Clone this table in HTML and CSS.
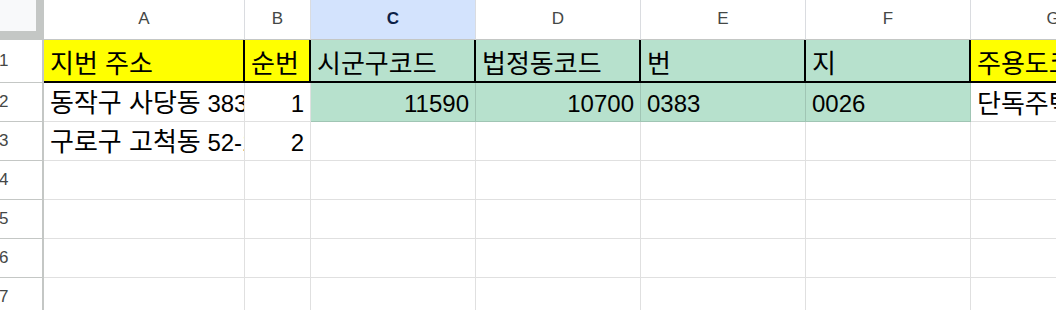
FILE: index.html
```html
<!DOCTYPE html>
<html lang="ko">
<head>
<meta charset="utf-8">
<title>Sheet</title>
<link rel="stylesheet" href="styles.css">
</head>
<body>
<div class="sheet">
  <div class="corner"></div>
  <div class="colhdr">A</div>
  <div class="colhdr">B</div>
  <div class="colhdr active">C</div>
  <div class="colhdr">D</div>
  <div class="colhdr">E</div>
  <div class="colhdr">F</div>
  <div class="colhdr">G</div>

  <div class="rowhdr">1</div>
  <div class="cell head yellow"><span class="ko">지번 주소</span></div>
  <div class="cell head yellow"><span class="ko">순번</span></div>
  <div class="cell head green"><span class="ko">시군구코드</span></div>
  <div class="cell head green"><span class="ko">법정동코드</span></div>
  <div class="cell head green"><span class="ko">번</span></div>
  <div class="cell head green"><span class="ko">지</span></div>
  <div class="cell head yellow"><span class="ko">주용도코드</span></div>

  <div class="rowhdr">2</div>
  <div class="cell"><span><span class="ko">동작구 사당동</span> 383-26</span></div>
  <div class="cell num">1</div>
  <div class="cell num green">11590</div>
  <div class="cell num green">10700</div>
  <div class="cell green">0383</div>
  <div class="cell green">0026</div>
  <div class="cell"><span class="ko">단독주택</span></div>

  <div class="rowhdr">3</div>
  <div class="cell"><span><span class="ko">구로구 고척동</span> 52-1</span></div>
  <div class="cell num">2</div>
  <div class="cell"></div>
  <div class="cell"></div>
  <div class="cell"></div>
  <div class="cell"></div>
  <div class="cell"></div>

  <div class="rowhdr">4</div>
  <div class="cell"></div><div class="cell"></div><div class="cell"></div><div class="cell"></div><div class="cell"></div><div class="cell"></div><div class="cell"></div>

  <div class="rowhdr">5</div>
  <div class="cell"></div><div class="cell"></div><div class="cell"></div><div class="cell"></div><div class="cell"></div><div class="cell"></div><div class="cell"></div>

  <div class="rowhdr">6</div>
  <div class="cell"></div><div class="cell"></div><div class="cell"></div><div class="cell"></div><div class="cell"></div><div class="cell"></div><div class="cell"></div>

  <div class="rowhdr">7</div>
  <div class="cell"></div><div class="cell"></div><div class="cell"></div><div class="cell"></div><div class="cell"></div><div class="cell"></div><div class="cell"></div>
</div>
</body>
</html>
```
FILE: styles.css
```css
html, body {
  margin: 0;
  padding: 0;
  background: #ffffff;
  overflow: hidden;
}

body {
  width: 1056px;
  height: 310px;
  font-family: "Liberation Sans", "Noto Sans CJK KR", sans-serif;
}

.sheet {
  display: grid;
  grid-template-columns: 44px 201px 66px 165px 165px 165px 165px 165px;
  grid-template-rows: 40px 43px repeat(6, 39px);
  width: 1136px;
}

.corner {
  box-sizing: border-box;
  background: #f8f9fa;
  border-right: 8px solid #c4c7c5;
  border-bottom: 9px solid #c4c7c5;
}

.colhdr {
  box-sizing: border-box;
  font-size: 17px;
  line-height: 37px;
  color: #444746;
  text-align: center;
  border-right: 1px solid #dadce0;
  border-bottom: 1px solid #c4c7c5;
}

.colhdr.active {
  background: #d3e3fd;
  color: #0b1f47;
  font-weight: bold;
}

.rowhdr {
  box-sizing: border-box;
  display: flex;
  align-items: center;
  font-size: 17px;
  line-height: 20px;
  color: #444746;
  text-indent: -1px;
  border-right: 2px solid #c4c7c5;
  border-bottom: 1px solid #c4c7c5;
  overflow: hidden;
  white-space: nowrap;
}

.cell {
  box-sizing: border-box;
  display: flex;
  align-items: flex-end;
  padding: 0 6px 3px 6px;
  font-size: 24px;
  line-height: 28px;
  color: #000000;
  white-space: nowrap;
  overflow: hidden;
  border-right: 1px solid rgba(0, 0, 0, 0.12);
  border-bottom: 1px solid rgba(0, 0, 0, 0.12);
}

.ko {
  font-size: 26px;
}

.cell.num {
  justify-content: flex-end;
}

.cell.head {
  border-right: 2px solid #000000;
  border-bottom: 2px solid #000000;
}

.yellow {
  background: #ffff00;
}

.green {
  background: #b7e1cd;
}
```
